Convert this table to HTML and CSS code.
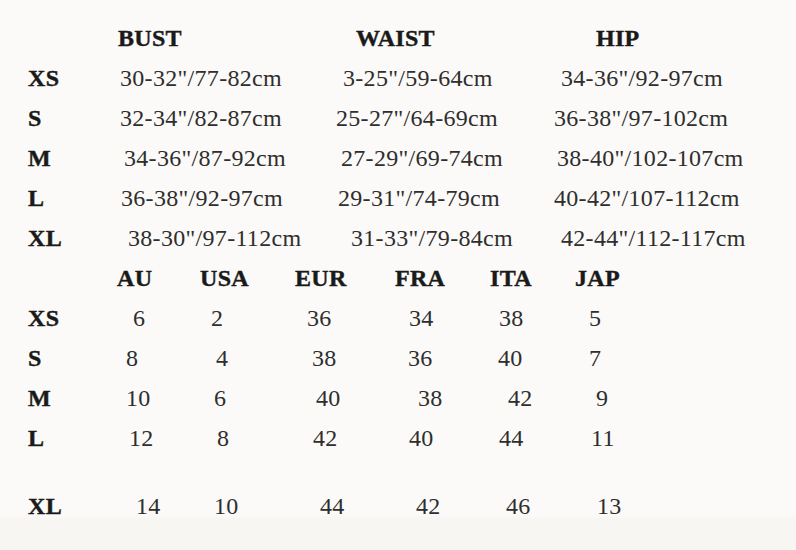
FILE: index.html
```html
<!DOCTYPE html>
<html lang="en">
<head>
<meta charset="utf-8">
<title>Size Chart</title>
<link rel="stylesheet" href="styles.css">
</head>
<body>
<main class="chart">
  <section class="table measures">
    <div class="row head">
      <span class="lbl"></span>
      <span class="cell c-bust"><b class="ml-2">BUST</b></span>
      <span class="cell c-waist"><b class="ml20">WAIST</b></span>
      <span class="cell c-hip"><b class="ml43">HIP</b></span>
    </div>
    <div class="row">
      <b class="lbl">XS</b>
      <span class="cell c-bust">30-32"/77-82cm</span>
      <span class="cell c-waist ml7">3-25"/59-64cm</span>
      <span class="cell c-hip ml8">34-36"/92-97cm</span>
    </div>
    <div class="row">
      <b class="lbl">S</b>
      <span class="cell c-bust">32-34"/82-87cm</span>
      <span class="cell c-waist">25-27"/64-69cm</span>
      <span class="cell c-hip ml1">36-38"/97-102cm</span>
    </div>
    <div class="row">
      <b class="lbl">M</b>
      <span class="cell c-bust ml4">34-36"/87-92cm</span>
      <span class="cell c-waist ml5">27-29"/69-74cm</span>
      <span class="cell c-hip ml4">38-40"/102-107cm</span>
    </div>
    <div class="row">
      <b class="lbl">L</b>
      <span class="cell c-bust ml1">36-38"/92-97cm</span>
      <span class="cell c-waist ml2">29-31"/74-79cm</span>
      <span class="cell c-hip ml1">40-42"/107-112cm</span>
    </div>
    <div class="row">
      <b class="lbl">XL</b>
      <span class="cell c-bust ml8">38-30"/97-112cm</span>
      <span class="cell c-waist ml15">31-33"/79-84cm</span>
      <span class="cell c-hip ml8">42-44"/112-117cm</span>
    </div>
  </section>

  <section class="table sizes">
    <div class="row head">
      <span class="lbl"></span>
      <b class="cell c-au">AU</b>
      <b class="cell c-usa">USA</b>
      <b class="cell c-eur">EUR</b>
      <b class="cell c-fra">FRA</b>
      <b class="cell c-ita">ITA</b>
      <b class="cell c-jap">JAP</b>
    </div>
    <div class="row">
      <b class="lbl">XS</b>
      <span class="cell c-au ml16">6</span>
      <span class="cell c-usa ml11">2</span>
      <span class="cell c-eur ml12">36</span>
      <span class="cell c-fra ml14">34</span>
      <span class="cell c-ita ml9">38</span>
      <span class="cell c-jap ml14">5</span>
    </div>
    <div class="row">
      <b class="lbl">S</b>
      <span class="cell c-au ml9">8</span>
      <span class="cell c-usa ml16">4</span>
      <span class="cell c-eur ml17">38</span>
      <span class="cell c-fra ml13">36</span>
      <span class="cell c-ita ml8">40</span>
      <span class="cell c-jap ml14">7</span>
    </div>
    <div class="row">
      <b class="lbl">M</b>
      <span class="cell c-au ml9">10</span>
      <span class="cell c-usa ml14">6</span>
      <span class="cell c-eur ml21">40</span>
      <span class="cell c-fra ml23">38</span>
      <span class="cell c-ita ml18">42</span>
      <span class="cell c-jap ml21">9</span>
    </div>
    <div class="row">
      <b class="lbl">L</b>
      <span class="cell c-au ml12">12</span>
      <span class="cell c-usa ml17">8</span>
      <span class="cell c-eur ml18">42</span>
      <span class="cell c-fra ml14">40</span>
      <span class="cell c-ita ml9">44</span>
      <span class="cell c-jap ml16">11</span>
    </div>
    <div class="row last">
      <b class="lbl">XL</b>
      <span class="cell c-au ml19">14</span>
      <span class="cell c-usa ml14">10</span>
      <span class="cell c-eur ml25">44</span>
      <span class="cell c-fra ml21">42</span>
      <span class="cell c-ita ml16">46</span>
      <span class="cell c-jap ml22">13</span>
    </div>
  </section>
</main>
</body>
</html>
```

FILE: styles.css
```css
html, body {
  margin: 0;
  padding: 0;
}

body {
  width: 796px;
  height: 550px;
  overflow: hidden;
  background: linear-gradient(to bottom, #fbfaf8 0, #fbfaf8 515px, #f7f6f3 519px, #f7f6f3 100%);
  color: #2e2e2e;
  font-family: "Liberation Serif", "Times New Roman", serif;
  font-size: 24px;
  letter-spacing: 0.3px;
}

.chart {
  padding: 18px 0 0 28px;
}

.row {
  display: flex;
  height: 40px;
  line-height: 40px;
  white-space: nowrap;
}

.row.last {
  margin-top: 28px;
}

b {
  font-weight: bold;
  color: #1a1a1a;
  -webkit-text-stroke: 0.4px #1a1a1a;
}

.cell {
  display: block;
  box-sizing: border-box;
}

.cell b {
  display: inline-block;
}

/* measurement table columns */
.measures .lbl { width: 92px; }
.c-bust  { width: 216px; }
.c-waist { width: 217px; }
.c-hip   { width: 230px; }

/* size conversion table columns */
.sizes .lbl { width: 89px; }
.c-au  { width: 83px; }
.c-usa { width: 95px; }
.c-eur { width: 100px; }
.c-fra { width: 95px; }
.c-ita { width: 85px; }
.c-jap { width: 80px; }

/* hand-set offsets, as in the original chart */
.ml-2 { margin-left: -2px; }
.ml1  { padding-left: 1px; }
.ml2  { padding-left: 2px; }
.ml4  { padding-left: 4px; }
.ml5  { padding-left: 5px; }
.ml7  { padding-left: 7px; }
.ml8  { padding-left: 8px; }
.ml9  { padding-left: 9px; }
.ml11 { padding-left: 11px; }
.ml12 { padding-left: 12px; }
.ml13 { padding-left: 13px; }
.ml14 { padding-left: 14px; }
.ml15 { padding-left: 15px; }
.ml16 { padding-left: 16px; }
.ml17 { padding-left: 17px; }
.ml18 { padding-left: 18px; }
.ml19 { padding-left: 19px; }
.ml20 { margin-left: 20px; }
.ml21 { padding-left: 21px; }
.ml22 { padding-left: 22px; }
.ml23 { padding-left: 23px; }
.ml25 { padding-left: 25px; }
.ml43 { margin-left: 43px; }
```
